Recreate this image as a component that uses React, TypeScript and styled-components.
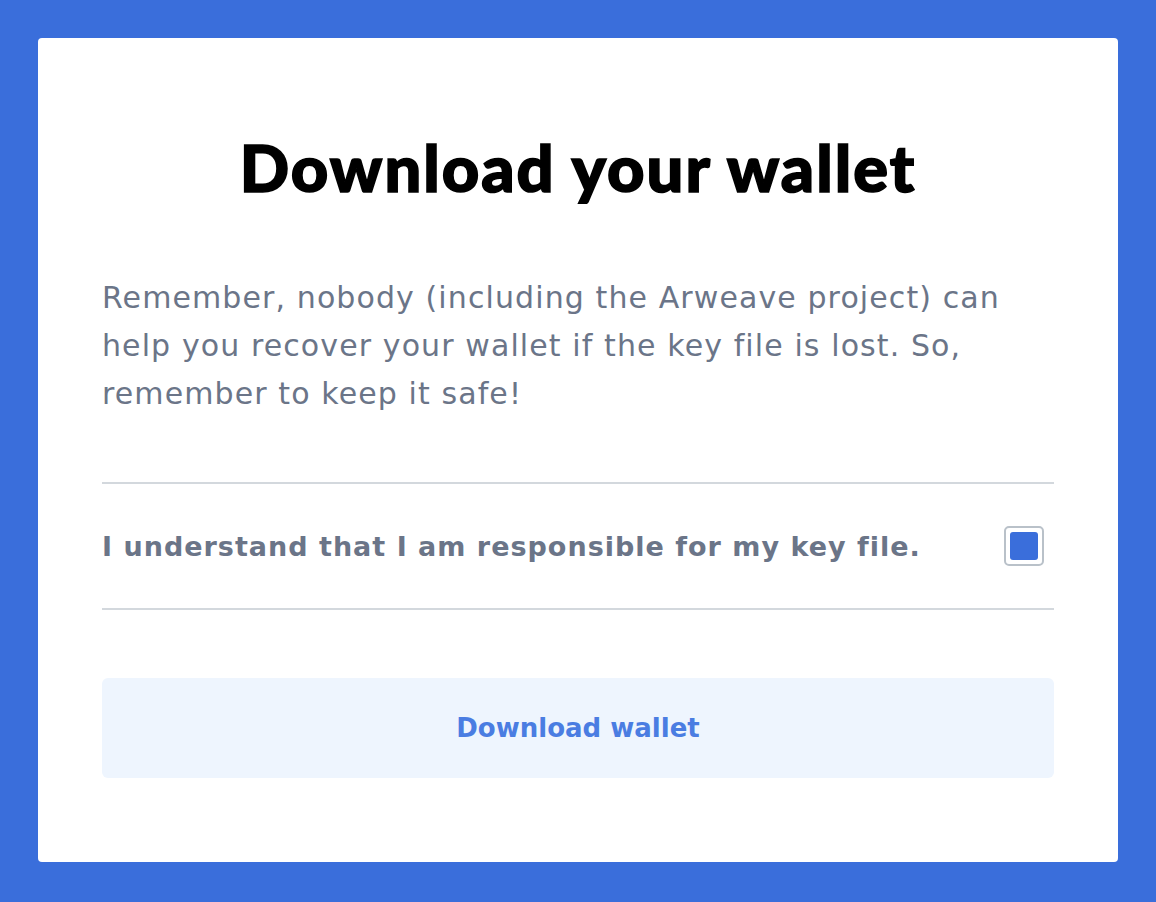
import React, { useState } from "react";
import styled, { createGlobalStyle } from "styled-components";

const Global = createGlobalStyle`
  html, body { margin: 0; padding: 0; }
  body {
    background: #3a6edb;
    font-family: "DejaVu Sans", "Liberation Sans", sans-serif;
  }
`;

const Page = styled.div`
  box-sizing: border-box;
  width: 1156px;
  height: 902px;
  padding: 38px;
  background: #3a6edb;
`;

const Card = styled.div`
  box-sizing: border-box;
  height: 824px;
  background: #ffffff;
  border-radius: 4px;
  padding: 89px 64px 0 64px;
  display: flex;
  flex-direction: column;
`;

const Title = styled.h1`
  margin: 0;
  text-align: center;
  font-family: Lato, Roboto, sans-serif;
  font-weight: 900;
  font-size: 65px;
  line-height: 80px;
  letter-spacing: 2px;
  color: #000;
  -webkit-text-stroke: 1.6px #000;
`;

const Text = styled.p`
  margin: 67px 0 0 0;
  font-family: "DejaVu Sans", sans-serif;
  font-size: 30px;
  line-height: 48px;
  letter-spacing: 1.1px;
  color: #6b7588;
`;

const Spacer = styled.div`
  height: 64px;
`;

const Divider = styled.hr`
  margin: 0;
  border: 0;
  height: 2px;
  background: #d3d8dd;
`;

const Row = styled.label`
  display: flex;
  align-items: center;
  justify-content: space-between;
  height: 124px;
  padding-right: 10px;
  cursor: pointer;
`;

const RowText = styled.span`
  font-family: "DejaVu Sans", sans-serif;
  font-weight: 700;
  font-size: 27px;
  letter-spacing: 1px;
  color: #6b7588;
`;

const Check = styled.span<{ $on: boolean }>`
  box-sizing: border-box;
  width: 40px;
  height: 40px;
  border: 2px solid #b9c1c9;
  border-radius: 5px;
  padding: 4px;
  display: flex;
  &::after {
    content: "";
    flex: 1;
    border-radius: 3px;
    background: ${(p) => (p.$on ? "#3a6edb" : "transparent")};
  }
`;

const Button = styled.button`
  margin-top: 68px;
  height: 100px;
  border: 0;
  border-radius: 6px;
  background: #eef5fe;
  color: #4a7de2;
  font-family: "DejaVu Sans", sans-serif;
  font-weight: 700;
  font-size: 26px;
  cursor: pointer;
`;

export default function App() {
  const [on, setOn] = useState(true);
  return (
    <>
      <Global />
      <Page>
        <Card>
          <Title>Download your wallet</Title>
          <Text>
            Remember, nobody (including the Arweave project) can
            <br />
            help you recover your wallet if the key file is lost. So,
            <br />
            remember to keep it safe!
          </Text>
          <Spacer />
          <Divider />
          <Row onClick={() => setOn(!on)}>
            <RowText>I understand that I am responsible for my key file.</RowText>
            <Check $on={on} />
          </Row>
          <Divider />
          <Button>Download wallet</Button>
        </Card>
      </Page>
    </>
  );
}
